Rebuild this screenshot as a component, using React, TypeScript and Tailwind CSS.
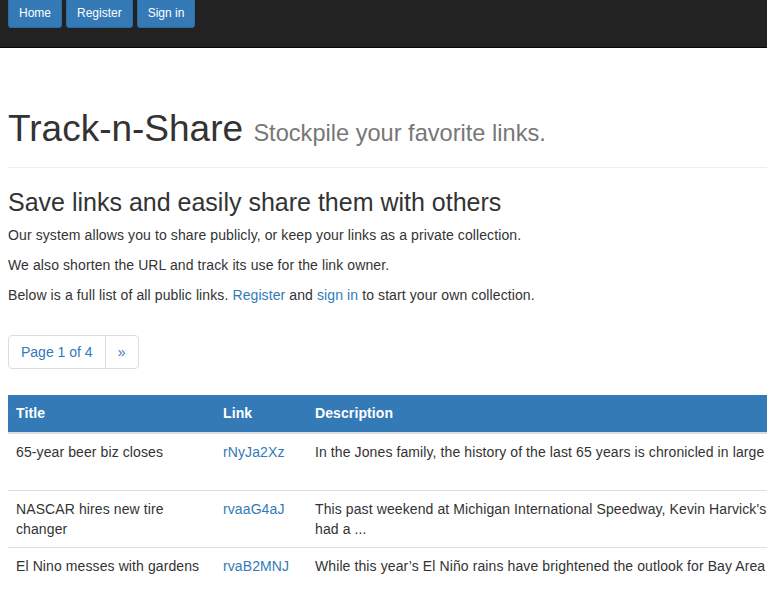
const rows = [
  {
    title: ["65-year beer biz closes"],
    link: "rNyJa2Xz",
    desc: ["In the Jones family, the history of the last 65 years is chronicled in large type on the labels."],
    extra: ["Added", "Jan 2016"],
  },
  {
    title: ["NASCAR hires new tire", "changer"],
    link: "rvaaG4aJ",
    desc: ["This past weekend at Michigan International Speedway, Kevin Harvick's crew", "had a ..."],
    extra: ["Added", ""],
  },
  {
    title: ["El Nino messes with gardens"],
    link: "rvaB2MNJ",
    desc: ["While this year\u2019s El Ni\u00f1o rains have brightened the outlook for Bay Area residents"],
    extra: ["Added"],
  },
]

function Lines({ lines }: { lines: string[] }) {
  return (
    <>
      {lines.map((l, i) => (
        <div key={i} className="whitespace-nowrap">
          {l || "\u00a0"}
        </div>
      ))}
    </>
  )
}

export default function App() {
  return (
    <div className="w-[767px] h-[589px] overflow-hidden bg-white text-[14px] leading-[20px] tracking-[0.1px] text-[#333] font-['Liberation_Sans',Arial,sans-serif]">
      {/* Top navbar */}
      <nav className="h-[48px] bg-[#222] border-b border-[#080808] flex gap-[4px] px-[8px] items-start">
        <button className="-mt-[2px] h-[30px] px-[10px] rounded-[3px] bg-[#337ab7] border border-[#2e6da4] text-white text-[12px] leading-[18px] tracking-normal">
          Home
        </button>
        <button className="-mt-[2px] h-[30px] px-[10px] rounded-[3px] bg-[#337ab7] border border-[#2e6da4] text-white text-[12px] leading-[18px] tracking-normal">
          Register
        </button>
        <button className="-mt-[2px] h-[30px] px-[10px] rounded-[3px] bg-[#337ab7] border border-[#2e6da4] text-white text-[12px] leading-[18px] tracking-normal">
          Sign in
        </button>
      </nav>

      <div className="w-[1170px] px-[8px] flex flex-col items-start">
        {/* Page header */}
        <div className="mt-[61px] self-stretch pb-[14px] border-b border-[#eee]">
          <h1 className="text-[37px] leading-[40px] tracking-normal text-[#333] whitespace-nowrap">
            Track-n-Share{" "}
            <span className="text-[23.6px] text-[#777]">Stockpile your favorite links.</span>
          </h1>
        </div>

        <h3 className="mt-[20px] mb-[9px] text-[25px] leading-[28px] tracking-normal whitespace-nowrap">
          Save links and easily share them with others
        </h3>
        <p className="mb-[10px]">Our system allows you to share publicly, or keep your links as a private collection.</p>
        <p className="mb-[10px]">We also shorten the URL and track its use for the link owner.</p>
        <p className="mb-[10px]">
          Below is a full list of all public links.{" "}
          <a className="text-[#337ab7]">Register</a> and <a className="text-[#337ab7]">sign in</a> to start your own
          collection.
        </p>

        {/* Pagination */}
        <div className="mt-[20px] flex">
          <a className="h-[34px] px-[12px] py-[6px] border border-[#ddd] rounded-l-[4px] text-[#337ab7] tracking-normal">
            Page 1 of 4
          </a>
          <a className="h-[34px] px-[12px] py-[6px] -ml-px border border-[#ddd] rounded-r-[4px] text-[#337ab7]">
            »
          </a>
        </div>

        {/* Links table */}
        <table className="mt-[26px] w-full border-collapse text-left">
          <thead className="bg-[#337ab7] text-white">
            <tr>
              <th className="w-[207px] px-[8px] pt-[8px] pb-[9px] font-bold border-b-2 border-[#ddd]">Title</th>
              <th className="w-[92px] px-[8px] pt-[8px] pb-[9px] font-bold border-b-2 border-[#ddd]">Link</th>
              <th className="w-[560px] px-[8px] pt-[8px] pb-[9px] font-bold border-b-2 border-[#ddd]">Description</th>
              <th className="px-[8px] pt-[8px] pb-[9px] font-bold border-b-2 border-[#ddd]">Info</th>
            </tr>
          </thead>
          <tbody>
            {rows.map((r, i) => (
              <tr key={r.link} className={i > 0 ? "border-t border-[#ddd]" : ""}>
                <td className="p-[8px] align-top">
                  <Lines lines={r.title} />
                </td>
                <td className="p-[8px] align-top text-[#337ab7]">{r.link}</td>
                <td className="p-[8px] align-top overflow-hidden">
                  <Lines lines={r.desc} />
                </td>
                <td className="p-[8px] align-top">
                  <Lines lines={r.extra} />
                </td>
              </tr>
            ))}
          </tbody>
        </table>
      </div>
    </div>
  )
}
